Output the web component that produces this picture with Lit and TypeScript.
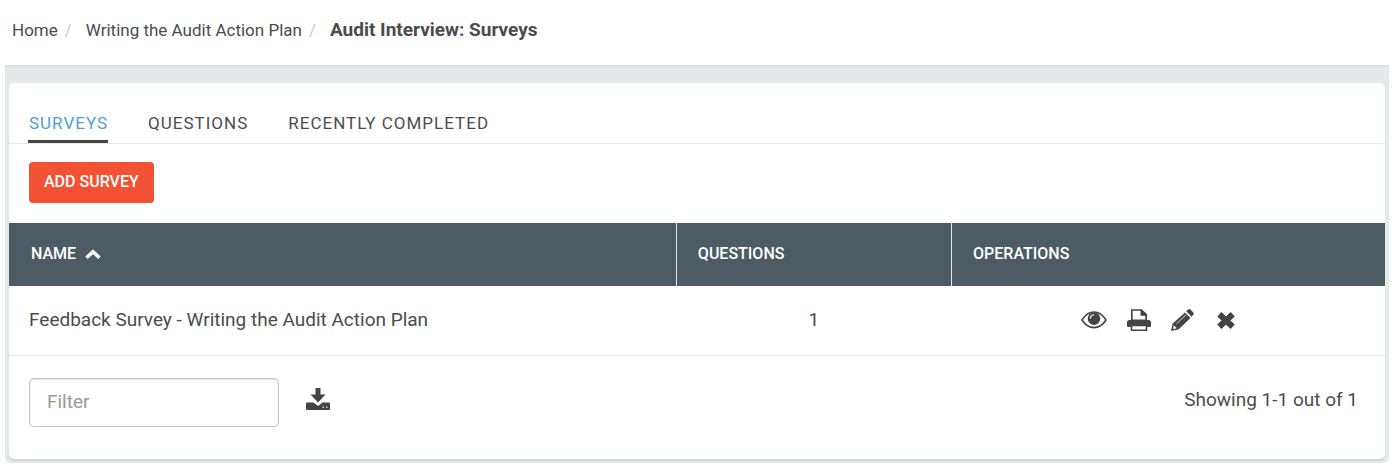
import { LitElement, html, css, svg } from "lit";
import { customElement, state } from "lit/decorators.js";

interface Survey {
  name: string;
  questions: number;
}

const eyeIcon = svg`
  <path d="M1 9C4 4.200 8.300 1 13 1S22 4.200 25 9C22 13.800 17.700 16.600 13 16.600S4 13.800 1 9Z" fill="none" stroke="currentColor" stroke-width="1.600"/>
  <circle cx="13" cy="7.600" r="6.300" fill="currentColor"/>
  <path d="M9.400 7.200A3.800 3.800 0 0 1 12.600 3.800" fill="none" stroke="#fff" stroke-width="1.100" stroke-linecap="round"/>`;

const printIcon = svg`
  <path d="M4.800 12V1h9.700l4.700 4.700V12" fill="none" stroke="currentColor" stroke-width="1.700"/>
  <path d="M14 1v5.300h5.500Z" fill="currentColor" stroke="currentColor"/>
  <path d="M2.500 11H4v-.5h16v.5h1.500a2.500 2.500 0 0 1 2.500 2.500V17a1 1 0 0 1-1 1H1a1 1 0 0 1-1-1v-3.500A2.500 2.500 0 0 1 2.500 11Z" fill="currentColor"/>
  <path d="M4.500 16.500h15v4.700h-15z" fill="#fff" stroke="currentColor" stroke-width="1.600" stroke-linejoin="round"/>`;

const pencilIcon = svg`
  <path d="M14 3.500 19.500 9 7.500 20.500 0 22l1.700-7.500Z" fill="currentColor"/>
  <path d="m15.200 2.300 1.900-1.700q1.200-1.200 2.400 0l2.800 2.800q1.200 1.200 0 2.400l-1.700 1.900Z" fill="currentColor"/>
  <path d="m5.500 14.800 9.500-9" stroke="#fff" stroke-width=".8" fill="none"/>
  <path d="m2.800 16.200 3 3-3.200.8-.6-.6Z" fill="#fff"/>`;

const removeIcon = svg`
  <path d="M5.300 2.200 18.700 14.800M18.700 2.200 5.300 14.800" stroke="currentColor" stroke-width="6" fill="none"/>`;

const downloadIcon = svg`
  <path d="M9.500 0h5v6.500H19.500L12 14.500 4.500 6.500h5Z" fill="currentColor"/>
  <path d="M1 14.500h6.500l4.500 3.500 4.500-3.500H23a1 1 0 0 1 1 1V21a1 1 0 0 1-1 1H1a1 1 0 0 1-1-1v-5.500a1 1 0 0 1 1-1Z" fill="currentColor"/>
  <path d="M16.500 18.500h1.500v1.500h-1.500zM20 18.500h1.500v1.500H20z" fill="#fff" opacity=".7"/>`;

const sortIcon = svg`
  <path d="m1.500 8.800 6.500-6 6.500 6" stroke="currentColor" stroke-width="3.600" fill="none"/>`;

@customElement("app-root")
export class AppRoot extends LitElement {
  static styles = css`
    :host {
      display: block;
      background: #fff;
      color: #4c4c4c;
      font-family: Roboto, "Liberation Sans", sans-serif;
      font-size: 19px;
      line-height: 24px;
    }
    * { box-sizing: border-box; }
    a { color: inherit; text-decoration: none; }
    .crumbs {
      display: flex;
      align-items: baseline;
      margin: 0;
      padding: 18px 12px 23px;
      list-style: none;
      font-size: 17px;
    }
    .crumbs li + li::before {
      content: "/";
      padding: 0 14px 0 7px;
      color: #ccc;
      font-size: 17px;
    }
    .crumbs .last { font-size: 19px; }
    .current { font-weight: 700; }
    .page {
      margin: 0 7px 7px 5px;
      padding: 18px 4px 4px;
      background: #e4e9ec;
      border-radius: 0 0 6px 6px;
      box-shadow: inset 0 2px 2px -1px #d3d9dd;
    }
    .card {
      background: #fff;
      border-radius: 5px;
      box-shadow: 0 2px 1px #cfd6da;
    }
    .tabs {
      display: flex;
      gap: 39px;
      padding: 28px 19px 0;
      border-bottom: 1px solid #ececec;
    }
    .tab {
      padding: 0 0 5px 1px;
      font-size: 17px;
      letter-spacing: 1px;
      text-transform: uppercase;
      border-bottom: 3px solid transparent;
    }
    .tab.active { color: #4a9fd8; border-color: #444; }
    .actions { padding: 18px 20px 20px; }
    .add {
      display: block;
      height: 41px;
      padding: 0 15px 2px;
      border: 0;
      border-radius: 4px;
      background: #f25133;
      color: #fff;
      font: 500 16px/24px Roboto, sans-serif;
      text-transform: uppercase;
    }
    table {
      width: 100%;
      border-collapse: collapse;
      table-layout: fixed;
    }
    .c-name { width: 48.500%; }
    .c-questions { width: 20%; }
    th {
      height: 63px;
      padding: 0 20px 2px;
      background: #4d5c62;
      color: #fff;
      font-size: 16px;
      font-weight: 500;
      text-align: left;
      text-transform: uppercase;
    }
    th + th { padding-left: 21px; border-left: 1px solid #e4e9ec; }
    td { height: 69px; padding: 0 20px; border-bottom: 1px solid #e6e6e6; }
    .count { text-align: center; }
    .sort {
      display: flex;
      align-items: center;
      gap: 9px;
      padding: 0 2px;
      border: 0;
      background: none;
      color: inherit;
      font: inherit;
      text-transform: inherit;
    }
    svg { display: block; overflow: visible; }
    .ops { display: flex; justify-content: center; align-items: center; gap: 20px; padding-right: 20px; }
    .icon { display: block; padding: 0; border: 0; background: none; color: #444; }
    .foot {
      display: flex;
      align-items: flex-start;
      padding: 22px 27px 32px 20px;
    }
    .filter {
      width: 250px;
      height: 49px;
      margin-right: 27px;
      padding: 0 17px 2px;
      border: 1px solid #c4c4c4;
      border-radius: 5px;
      box-shadow: inset 0 1px 2px #e2e2e2;
      color: #444;
      font: 19px/24px Roboto, sans-serif;
    }
    .filter::placeholder { color: #999; opacity: 1; }
    .foot .icon, .summary { margin-top: 10px; }
    .summary { margin-left: auto; }
  `;

  @state() private filter = "";

  private surveys: Survey[] = [{ name: "Feedback Survey - Writing the Audit Action Plan", questions: 1 }];

  private icon(w: number, h: number, shape: unknown) {
    return html`<svg width=${w} height=${h} viewBox="0 0 ${w} ${h}" aria-hidden="true">${shape}</svg>`;
  }

  private action(label: string, w: number, h: number, shape: unknown) {
    return html`<button class="icon" type="button" aria-label=${label}>${this.icon(w, h, shape)}</button>`;
  }

  render() {
    const rows = this.surveys.filter((s) => s.name.toLowerCase().includes(this.filter.toLowerCase()));
    return html`
      <nav aria-label="Breadcrumb">
        <ol class="crumbs">
          <li><a href="#">Home</a></li>
          <li><a href="#">Writing the Audit Action Plan</a></li>
          <li class="last"><span class="current" aria-current="page">Audit Interview: Surveys</span></li>
        </ol>
      </nav>
      <main class="page">
        <section class="card">
          <nav class="tabs" aria-label="Sections">
            <a class="tab active" href="#">Surveys</a>
            <a class="tab" href="#">Questions</a>
            <a class="tab" href="#">Recently completed</a>
          </nav>
          <div class="actions"><button class="add" type="button">Add survey</button></div>
          <table>
            <colgroup><col class="c-name" /><col class="c-questions" /><col /></colgroup>
            <thead>
              <tr>
                <th aria-sort="ascending"><button class="sort" type="button">Name ${this.icon(16, 10, sortIcon)}</button></th>
                <th>Questions</th>
                <th>Operations</th>
              </tr>
            </thead>
            <tbody>
              ${rows.map((s) => html`
                <tr>
                  <td>${s.name}</td>
                  <td class="count">${s.questions}</td>
                  <td>
                    <div class="ops">
                      ${this.action("Preview", 26, 18, eyeIcon)}
                      ${this.action("Print", 24, 22, printIcon)}
                      ${this.action("Edit", 23, 22, pencilIcon)}
                      ${this.action("Delete", 22, 17, removeIcon)}
                    </div>
                  </td>
                </tr>`)}
            </tbody>
          </table>
          <div class="foot">
            <input class="filter" type="text" placeholder="Filter" aria-label="Filter"
              .value=${this.filter}
              @input=${(e: Event) => (this.filter = (e.target as HTMLInputElement).value)} />
            ${this.action("Download", 24, 22, downloadIcon)}
            <span class="summary">Showing 1-1 out of 1</span>
          </div>
        </section>
      </main>
    `;
  }
}
